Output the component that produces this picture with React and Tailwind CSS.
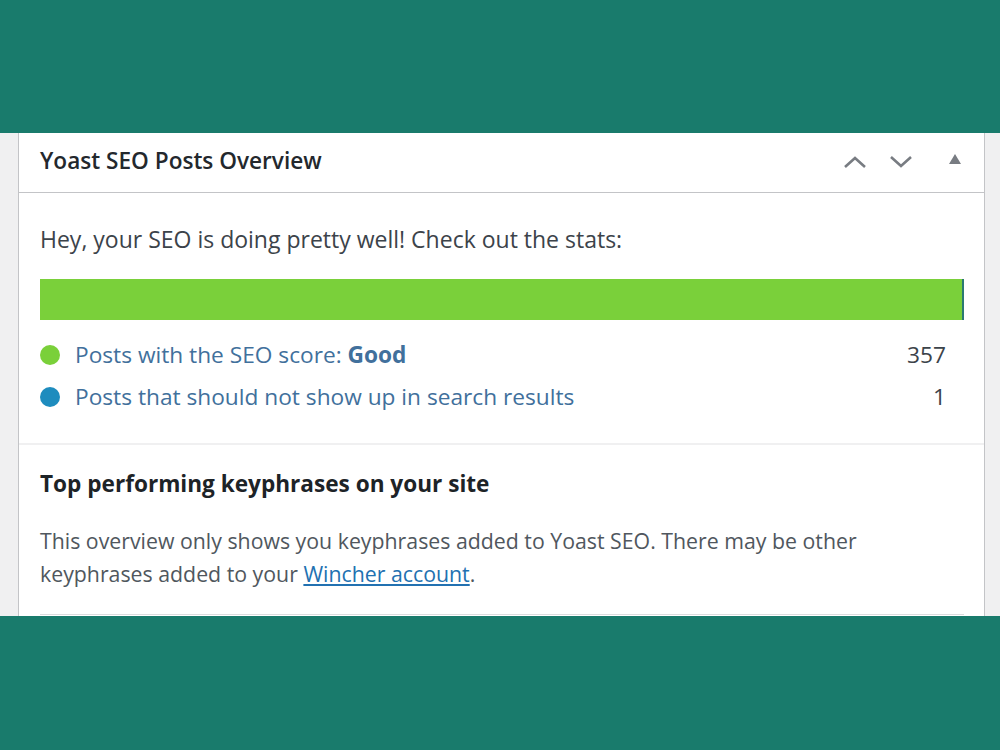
export default function App() {
  const font = { fontFamily: '"Open Sans", "Noto Sans", sans-serif' };
  return (
    <div className="w-[1000px] h-[750px] bg-[#197b6c] flex flex-col" style={font}>
      <div className="h-[133px] shrink-0" />
      <div className="h-[483px] shrink-0 bg-[#f0f0f1] flex pl-[18px] pr-[15px]">
        <div className="flex-1 bg-white border-x border-[#c3c4c7] flex flex-col overflow-hidden">
          {/* widget header */}
          <div className="h-[60px] shrink-0 border-b border-[#c3c4c7] flex items-center pl-[21px] pr-[23px]">
            <h2 className="text-[22.6px] leading-[30px] font-semibold text-[#23282d] -mt-[3px]">Yoast SEO Posts Overview</h2>
            <div className="ml-auto flex items-center -mt-[2px]">
              <svg width="24" height="14" viewBox="0 0 24 14" className="mr-[22px]">
                <polyline points="2,12 12,3 22,12" fill="none" stroke="#787c82" strokeWidth="2.6" />
              </svg>
              <svg width="24" height="14" viewBox="0 0 24 14" className="mr-[36px]">
                <polyline points="2,2 12,11 22,2" fill="none" stroke="#787c82" strokeWidth="2.6" />
              </svg>
              <svg width="12" height="10" viewBox="0 0 12 10" className="-mt-[6px]">
                <polygon points="0,10 6,0 12,10" fill="#787c82" />
              </svg>
            </div>
          </div>

          {/* SEO score overview */}
          <div className="pl-[21px] pr-[20px] pt-[31px] pb-[25px] border-b-2 border-[#f0f0f1]">
            <p className="text-[23px] text-[#3c434a] leading-[30px]">
              Hey, your SEO is doing pretty well! Check out the stats:
            </p>
            <div className="mt-[25px] h-[41px] flex">
              <div className="flex-1 bg-[#7ad03a]" />
              <div className="w-[2px] bg-[#2a7a72]" />
            </div>
            <ul className="mt-[14px] pr-[18px]">
              <li className="flex items-center h-[42px]">
                <span className="w-[20px] h-[20px] rounded-full bg-[#7ad03a] mr-[15px] shrink-0" />
                <span className="text-[22.7px] leading-[30px] text-[#41709c]">
                  Posts with the SEO score: <b className="font-bold">Good</b>
                </span>
                <span className="ml-auto text-[22.7px] leading-[30px] text-[#3c434a]">357</span>
              </li>
              <li className="flex items-center h-[42px]">
                <span className="w-[20px] h-[20px] rounded-full bg-[#1e8cbe] mr-[15px] shrink-0" />
                <span className="text-[22.7px] leading-[30px] text-[#41709c]">
                  Posts that should not show up in search results
                </span>
                <span className="ml-auto text-[22.7px] leading-[30px] text-[#3c434a]">1</span>
              </li>
            </ul>
          </div>

          {/* Wincher keyphrases */}
          <div className="pl-[21px] pr-[20px] pt-[24px]">
            <h3 className="text-[22.6px] font-bold text-[#1d2327] leading-[30px]">
              Top performing keyphrases on your site
            </h3>
            <p className="mt-[25px] text-[21.3px] text-[#50575e] leading-[33px]">
              This overview only shows you keyphrases added to Yoast SEO. There may be other
              <br />
              keyphrases added to your{" "}
              <a href="#" className="text-[#2271b1] underline">Wincher account</a>.
            </p>
            <div className="mt-[24px] h-[40px] border-t border-[#dcdcde]" />
          </div>
        </div>
      </div>
      <div className="flex-1" />
    </div>
  );
}
